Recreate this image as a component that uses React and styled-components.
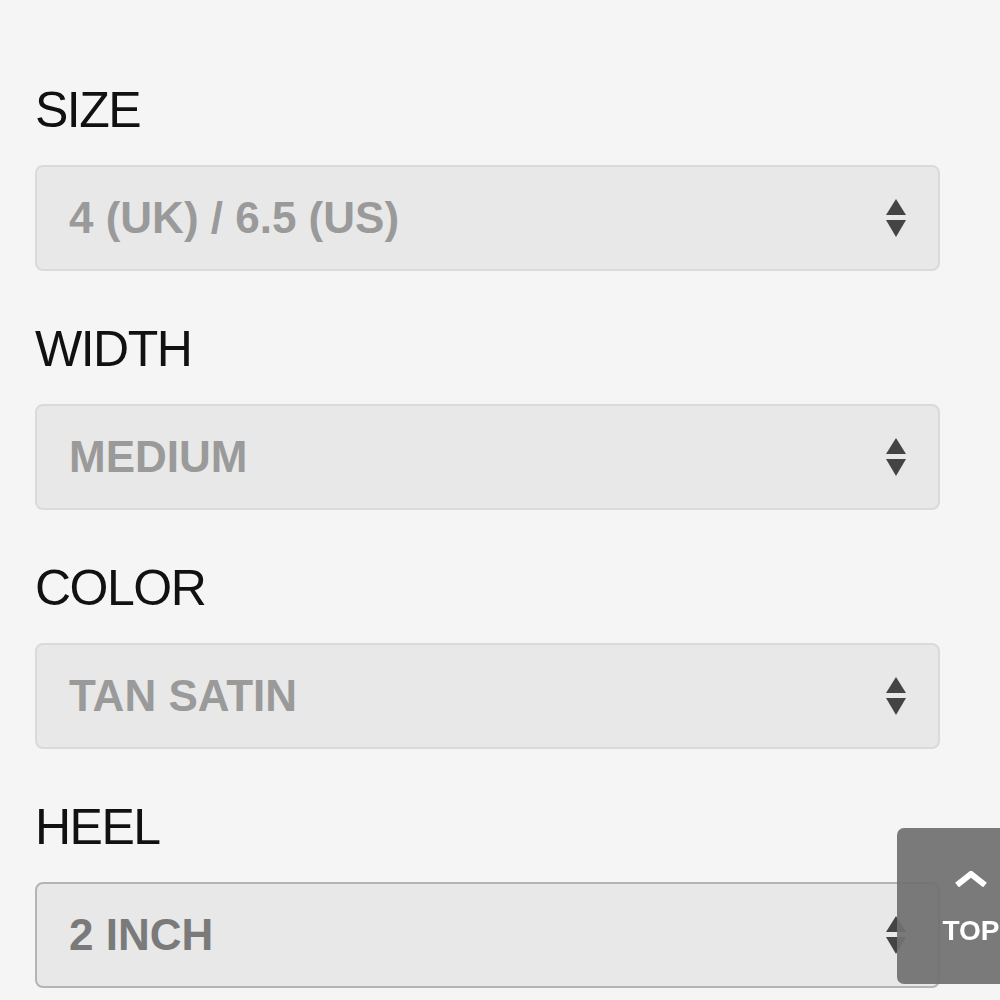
import React from 'react';
import styled, { createGlobalStyle } from 'styled-components';

const GlobalStyle = createGlobalStyle`
  html, body {
    margin: 0;
    padding: 0;
    background: #f5f5f5;
    font-family: "Liberation Sans", Arial, sans-serif;
  }
`;

export const Page = styled.div`
  width: 1000px;
  height: 1000px;
  overflow: hidden;
  position: relative;
  box-sizing: border-box;
  padding: 85px 60px 0 35px;
  background: #f5f5f5;
`;

export const Field = styled.div`
  display: flex;
  flex-direction: column;
  margin-bottom: 53px;
`;

export const Label = styled.div`
  font-size: 50px;
  line-height: 50px;
  letter-spacing: -1.5px;
  color: #111;
  margin-bottom: 30px;
`;

export const SelectBox = styled.div`
  height: 106px;
  box-sizing: border-box;
  display: flex;
  align-items: center;
  justify-content: space-between;
  padding: 0 32px 0 32px;
  background: #e8e8e8;
  border: 2px solid ${(p) => (p.$focused ? '#b4b4b4' : '#dadada')};
  border-radius: 8px;
`;

export const Value = styled.span`
  font-size: 44px;
  font-weight: bold;
  color: ${(p) => (p.$focused ? '#7a7a7a' : '#9a9a9a')};
`;

export const Arrows = styled.svg`
  width: 20px;
  height: 38px;
  flex-shrink: 0;
`;

export const TopButton = styled.button`
  position: fixed;
  left: 897px;
  top: 828px;
  width: 148px;
  height: 156px;
  border: none;
  border-radius: 7px;
  background: rgba(112, 112, 112, 0.93);
  color: #fff;
  display: flex;
  flex-direction: column;
  align-items: center;
  justify-content: center;
  gap: 28px;
  padding: 6px 0 0;
  font-family: "Liberation Sans", Arial, sans-serif;
  font-size: 28px;
  font-weight: bold;
  cursor: pointer;
`;

const SelectArrows = () => (
  <Arrows viewBox="0 0 20 38">
    <polygon points="10,0 20,16 0,16" fill="#444" />
    <polygon points="0,21 20,21 10,38" fill="#444" />
  </Arrows>
);

const fields = [
  { label: 'SIZE', value: '4 (UK) / 6.5 (US)' },
  { label: 'WIDTH', value: 'MEDIUM' },
  { label: 'COLOR', value: 'TAN SATIN' },
  { label: 'HEEL', value: '2 INCH', focused: true },
];

export default function App() {
  return (
    <>
      <GlobalStyle />
      <Page>
        {fields.map((f) => (
          <Field key={f.label}>
            <Label>{f.label}</Label>
            <SelectBox $focused={f.focused}>
              <Value $focused={f.focused}>{f.value}</Value>
              <SelectArrows />
            </SelectBox>
          </Field>
        ))}
        <TopButton>
          <svg width="34" height="16" viewBox="0 0 34 16">
            <polyline points="3,14 17,3 31,14" fill="none" stroke="#fff" strokeWidth="6" />
          </svg>
          <span>TOP</span>
        </TopButton>
      </Page>
    </>
  );
}
